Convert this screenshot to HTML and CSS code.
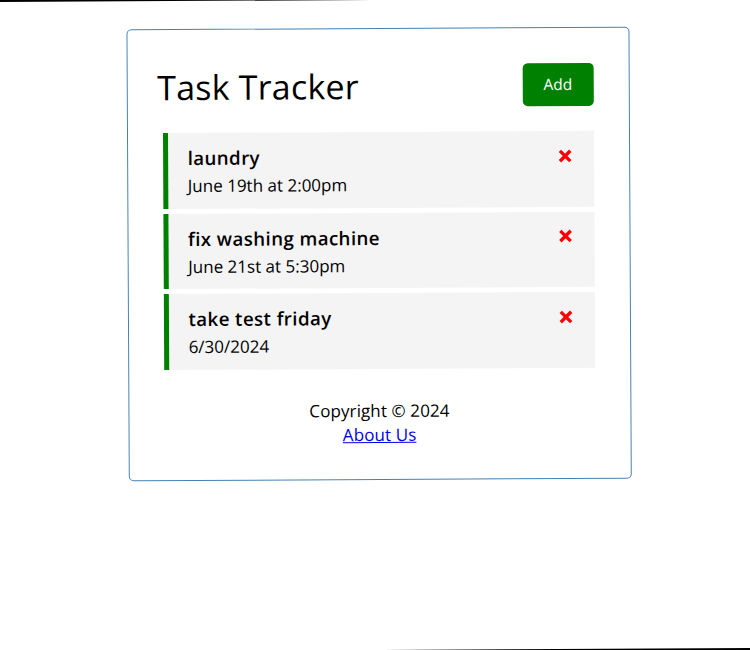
FILE: index.html
```html
<!DOCTYPE html>
<html lang="en">
<head>
<meta charset="utf-8">
<title>Task Tracker</title>
<link rel="stylesheet" href="styles.css">
</head>
<body>
  <div class="container">
    <header class="header">
      <h1>Task Tracker</h1>
      <button class="btn">Add</button>
    </header>
    <div class="tasks">
      <div class="task reminder">
        <h3>laundry
          <svg class="del" viewBox="0 0 14 14" aria-hidden="true"><path d="M1.8 1.8 L12.2 12.2 M12.2 1.8 L1.8 12.2"/></svg>
        </h3>
        <p>June 19th at 2:00pm</p>
      </div>
      <div class="task reminder">
        <h3>fix washing machine
          <svg class="del" viewBox="0 0 14 14" aria-hidden="true"><path d="M1.8 1.8 L12.2 12.2 M12.2 1.8 L1.8 12.2"/></svg>
        </h3>
        <p>June 21st at 5:30pm</p>
      </div>
      <div class="task reminder">
        <h3>take test friday
          <svg class="del" viewBox="0 0 14 14" aria-hidden="true"><path d="M1.8 1.8 L12.2 12.2 M12.2 1.8 L1.8 12.2"/></svg>
        </h3>
        <p>6/30/2024</p>
      </div>
    </div>
    <footer class="footer">
      <p>Copyright &copy; 2024</p>
      <a href="#about">About Us</a>
    </footer>
  </div>
</body>
</html>
```

FILE: styles.css
```css
* {
  box-sizing: border-box;
  margin: 0;
  padding: 0;
}

html {
  height: 650px;
  overflow: hidden;
  background:
    linear-gradient(to right, #000 50%, #fff 50%) top / 100% 3px no-repeat,
    linear-gradient(to right, #fff 50%, #000 50%) bottom / 100% 3px no-repeat,
    #fff;
}

body {
  height: 650px;
  background: #fff;
  padding: 28px 0 0 8px;
  transform: rotate(-0.3deg);
  font-family: "Open Sans", "Liberation Sans", sans-serif;
  color: #000;
}

.container {
  width: 503px;
  margin: 0 auto;
  border: 1px solid steelblue;
  border-radius: 5px;
  padding: 30px 30px 32px;
}

.header {
  display: flex;
  justify-content: space-between;
  align-items: center;
  margin-bottom: 20px;
}

.header h1 {
  font-size: 34px;
  line-height: 48px;
  font-weight: 500;
  letter-spacing: 0.2px;
}

.btn {
  background: #008000;
  color: #fff;
  border: none;
  border-radius: 5px;
  padding: 10px 21px;
  margin: 5px;
  font-family: inherit;
  font-size: 15.5px;
  line-height: 23px;
  font-weight: 500;
  cursor: pointer;
}

.task {
  background: #f4f4f4;
  margin: 5px;
  padding: 10px 20px 9.5px;
  cursor: pointer;
}

.task.reminder {
  border-left: 5px solid #008000;
}

.task h3 {
  display: flex;
  justify-content: space-between;
  align-items: center;
  font-size: 18.72px;
  line-height: 29px;
  font-weight: 600;
  letter-spacing: 0.4px;
}

.task p {
  font-size: 17px;
  line-height: 27px;
}

.del {
  width: 14px;
  height: 14px;
  margin-right: 2px;
  fill: none;
  stroke: #f00;
  stroke-width: 3.3;
}

.footer {
  margin-top: 30px;
  text-align: center;
  font-size: 17px;
  line-height: 24px;
  letter-spacing: 0.1px;
}

.footer a {
  color: #0000ee;
}
```
